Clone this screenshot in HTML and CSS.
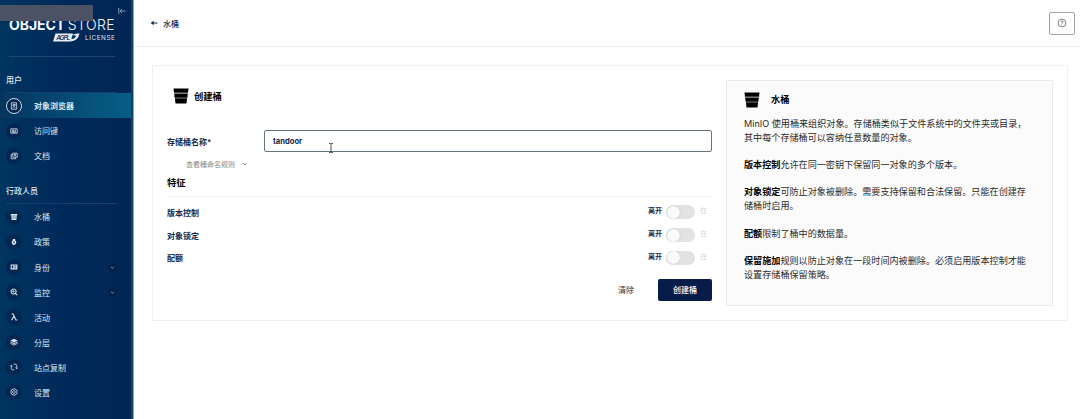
FILE: index.html
```html
<!DOCTYPE html>
<html lang="zh-CN">
<head>
  <meta charset="UTF-8">
  <meta name="viewport" content="width=device-width, initial-scale=1.0">
  <title>创建桶</title>
  <link rel="stylesheet" href="styles.css">
</head>
<body>
<div class="app">
  <nav class="sidebar">
    <div class="redact"></div>
    <svg class="collapse" viewBox="0 0 8 8"><path d="M.8 1v6M7.500 4H2M4 2L2 4l2 2"/></svg>
    <div class="logo">
      <div class="logo-name"><b>OBJECT</b><span>STORE</span></div>
      <div class="logo-license">
        <svg class="agpl" viewBox="0 0 27 9"><path class="plate" d="M2.500.5H20L17.500 8.500H0z"/><path class="swoosh" d="M17.500 8.500Q25 8 26.500.5Q21 0 19.500 2.500Q23 1.500 23 3.500Q21 6.500 18 6z"/><text x="3.200" y="6.800" textLength="14">AGPL</text></svg>
        <span>LICENSE</span>
      </div>
    </div>

    <div class="group">用户</div>
    <ul class="menu">
      <li class="item active"><i><svg viewBox="0 0 10 10"><path d="M1.700 1h6.600v8H1.700zM3.800 3h2.400v1.800H3.800zM3.500 7.200l1.500-1.700 2 1.700M6.800 3v1"/></svg></i><span>对象浏览器</span></li>
      <li class="item"><i><svg viewBox="0 0 10 10"><path d="M1 2.300h8v5.400H1zM2.800 4h1.700v1.500H2.800zM5.500 4h2M5.500 5.500h2M3 6.700h4"/></svg></i><span>访问键</span></li>
      <li class="item"><i><svg viewBox="0 0 10 10"><path d="M3.500 1.500H9v5H3.500zM3.500 3h-2v5.500H7v-2M5 3h2.500M5 4.500h2.500"/></svg></i><span>文档</span></li>
    </ul>

    <div class="group">行政人员</div>
    <ul class="menu">
      <li class="item"><i><svg viewBox="0 0 10 10"><path class="fill" d="M.8 1.200h8.400l-.3 2.300H1.100zM1.300 4h7.400l-.3 2H1.600zM1.700 6.500h6.600L8 8.800H2z"/></svg></i><span>水桶</span></li>
      <li class="item"><i><svg viewBox="0 0 10 10"><path class="fill" fill-rule="evenodd" d="M3.500 3V1.200h3V3Q7.900 3.500 7.900 5.500T5 9Q2.100 8 2.100 5.500T3.500 3zM4.400 4v3h1.200V4z"/></svg></i><span>政策</span></li>
      <li class="item"><i><svg viewBox="0 0 10 10"><path class="fill" fill-rule="evenodd" d="M.8 2h8.400v6H.8zM5.200 3.200v1h2.600v-1zM5.200 5.500v1h2.600v-1zM2.200 3.200v3.500h1.800V3.200z"/></svg></i><span>身份</span><svg class="chev" viewBox="0 0 8 8"><path d="M2.500 3.300L4 4.700l1.500-1.400"/></svg></li>
      <li class="item"><i><svg viewBox="0 0 10 10"><path class="bold" d="M4.500 1.200a3.200 3.200 0 1 0 .01 0M6.700 6.700L9 9M3 4.500l1-1 .7 1.500 1-.8"/></svg></i><span>监控</span><svg class="chev" viewBox="0 0 8 8"><path d="M2.500 3.300L4 4.700l1.500-1.400"/></svg></li>
      <li class="item"><i><svg viewBox="0 0 10 10"><path class="bold" d="M2 1.300h2L7.400 8.700H9M4.900 4L2 8.900"/></svg></i><span>活动</span></li>
      <li class="item"><i><svg viewBox="0 0 10 10"><path class="fill" d="M5 .8L9.500 3.200 5 5.500.5 3.200zM.5 4.200L5 6.500l4.500-2.300v1.200L5 7.700.5 5.400zM.5 6.300L5 8.500l4.500-2.200v.8L5 9.400.5 7.100z"/></svg></i><span>分层</span></li>
      <li class="item"><i><svg viewBox="0 0 10 10"><path d="M4.500 1.500H6.500Q8.400 1.500 8.400 3.500V7M6.800 5.600L8.400 7.200 9.800 5.600M5.500 8.500H3.500Q1.600 8.500 1.600 6.500V3M.2 4.400L1.600 2.800 3.200 4.400"/></svg></i><span>站点复制</span></li>
      <li class="item"><i><svg viewBox="0 0 10 10"><path d="M5 .9l2.900 1.200L9.100 5 7.900 7.900 5 9.100 2.100 7.900.9 5l1.200-2.900zM5 3.300a1.700 1.700 0 1 0 .01 0"/></svg></i><span>设置</span></li>
    </ul>
  </nav>

  <main class="main">
    <header class="topbar">
      <a class="back"><svg viewBox="0 0 8 8"><path d="M7.500 4H2"/><path class="head" d="M3.700 1.800v4.400L.6 4z"/></svg>水桶</a>
      <button class="help-btn"><svg viewBox="0 0 10 10"><circle cx="5" cy="5" r="3.900"/><path d="M3.900 4Q4 2.900 5.200 3T6.200 4.200L4.900 5.400v.5M4.800 6.500v.8"/></svg></button>
    </header>

    <div class="card">
      <form class="form">
        <h1 class="title"><svg class="bucket" viewBox="0 0 16 16"><path d="M.5.600h15l-.5 4.200H1zM1.200 5.400h13.600l-.4 4.300H1.600zM1.900 10.300h12.200l-.6 5.100H2.500z"/></svg>创建桶</h1>
        <div class="field">
          <label>存储桶名称*</label>
          <div class="input">tandoor<svg class="cursor" viewBox="0 0 6 10"><path d="M1 .5h1.500L3 1l.5-.5H5M3 1v8M1 9.500h1.500L3 9l.5.5H5"/></svg></div>
        </div>
        <div class="rules">查看桶命名规则<svg viewBox="0 0 8 8"><path d="M2.200 3.200L4 4.800l1.800-1.600"/></svg></div>
        <h2 class="subtitle">特征</h2>
        <div class="row"><label>版本控制</label><span class="off">离开</span><span class="switch"></span><span class="on">在</span></div>
        <div class="row"><label>对象锁定</label><span class="off">离开</span><span class="switch"></span><span class="on">在</span></div>
        <div class="row"><label>配额</label><span class="off">离开</span><span class="switch"></span><span class="on">在</span></div>
        <div class="actions">
          <button type="button" class="clear">清除</button>
          <button type="button" class="create">创建桶</button>
        </div>
      </form>

      <aside class="help">
        <h3 class="help-title"><svg class="bucket" viewBox="0 0 16 16"><path d="M.5.600h15l-.5 4.200H1zM1.200 5.400h13.600l-.4 4.300H1.600zM1.900 10.300h12.200l-.6 5.100H2.500z"/></svg>水桶</h3>
        <p>MinIO 使用桶来组织对象。存储桶类似于文件系统中的文件夹或目录，<br>其中每个存储桶可以容纳任意数量的对象。</p>
        <p><b>版本控制</b>允许在同一密钥下保留同一对象的多个版本。</p>
        <p><b>对象锁定</b>可防止对象被删除。需要支持保留和合法保留。只能在创建存<br>储桶时启用。</p>
        <p><b>配额</b>限制了桶中的数据量。</p>
        <p><b>保留施加</b>规则以防止对象在一段时间内被删除。必须启用版本控制才能<br>设置存储桶保留策略。</p>
      </aside>
    </div>
  </main>
</div>
</body>
</html>
```
FILE: styles.css
```css
* {
  box-sizing: border-box;
}
body {
  margin: 0;
  background: #fff;
  color: #12284c;
  font-family: Inter, "Noto Sans CJK SC", sans-serif;
  font-size: 8px;
  overflow: hidden;
}
svg {
  display: block;
  fill: none;
  stroke: currentColor;
}
button {
  font-family: inherit;
  font-size: 8px;
  padding: 0;
}
.app {
  display: flex;
  height: 419px;
}

/* Sidebar */
.sidebar {
  position: relative;
  width: 134px;
  flex: none;
  padding-right: 3px;
  color: #dbe6f1;
  background: linear-gradient(to right, transparent 131px, #0d426b 131px, #0d426b 133px, #7eabc2 133px), linear-gradient(to right, #003560 0, #002a5a 60px, #022654 131px);
}
.redact {
  position: absolute;
  top: 5px;
  left: 0;
  width: 93px;
  height: 16px;
  background: #4b5264;
  z-index: 2;
}
.collapse {
  position: absolute;
  top: 7px;
  left: 118px;
  width: 8px;
  height: 8px;
  color: #8ba4c0;
  stroke-width: .9;
}
.logo {
  height: 57px;
  margin: 0 16px 0 9px;
  padding-top: 17px;
  border-bottom: 1px solid #1b4771;
}
.logo-name {
  display: flex;
  justify-content: space-between;
  font-size: 14px;
  line-height: 16px;
  color: #f3f7fb;
}
.logo-name b {
  font-weight: 700;
  letter-spacing: -.05px;
}
.logo-name span {
  font-weight: 300;
  letter-spacing: .4px;
}
.logo-license {
  display: flex;
  justify-content: flex-end;
  align-items: center;
  gap: 5px;
  height: 9px;
  font-size: 6.4px;
  letter-spacing: .55px;
}
.logo-license span {
  margin-right: -.5px;
}
.agpl {
  width: 27px;
  height: 9px;
  stroke: none;
}
.plate,
.swoosh {
  fill: #e8eff6;
}
.agpl text {
  fill: #163a66;
  font-size: 6.5px;
  font-style: italic;
  font-weight: 600;
  letter-spacing: 0;
}
.group {
  height: 36px;
  margin: 0 14px 0 6px;
  padding-top: 16px;
  line-height: 14px;
  border-bottom: 1px solid #173f6c;
  font-weight: 500;
}
.menu {
  list-style: none;
  margin: 0;
  padding: 0;
}
.item {
  display: flex;
  align-items: center;
  height: 25.1px;
  padding: 0 14px 0 6px;
}
.item i {
  display: flex;
  align-items: center;
  justify-content: center;
  width: 16px;
  height: 16px;
  margin-right: 12px;
  border-radius: 50%;
  background: #022852;
}
.item i svg {
  width: 8px;
  height: 8px;
}
.item .fill {
  fill: currentColor;
  stroke: none;
}
.item .bold {
  stroke-width: 1.3;
}
.item.active {
  background: linear-gradient(to right, #04355f, #075e87);
  font-weight: 700;
}
.item.active i {
  border: 1px solid #c9d9e6;
}
.chev {
  width: 9px;
  height: 9px;
  margin-left: auto;
  border-radius: 50%;
  background: #02204a;
  color: #8298b4;
  stroke-width: .8;
}

/* Content */
.main {
  flex: 1;
}
.topbar {
  display: flex;
  align-items: center;
  justify-content: space-between;
  height: 47px;
  padding: 0 5px 0 16px;
  border-bottom: 1px solid #eee;
}
.back {
  display: flex;
  align-items: center;
  gap: 5px;
  font-weight: 500;
  color: #0c2b4d;
}
.back svg {
  width: 8px;
  height: 8px;
}
.back .head {
  fill: currentColor;
  stroke: none;
}
.help-btn {
  display: flex;
  align-items: center;
  justify-content: center;
  width: 26px;
  height: 23px;
  background: #fff;
  border: 1px solid #a5a5a5;
  border-radius: 2px;
  color: #5e5e5e;
}
.help-btn svg {
  width: 10px;
  height: 10px;
  stroke-width: .8;
}
.card {
  display: flex;
  gap: 14px;
  width: 916px;
  height: 256px;
  margin: 18px 0 0 18px;
  padding: 14px;
  border: 1px solid #f0f0f0;
}
.form {
  width: 545px;
}
.bucket {
  width: 16px;
  height: 16px;
  color: #000;
  fill: #000;
  stroke: none;
}
.title {
  display: flex;
  align-items: center;
  gap: 5px;
  height: 32px;
  margin: 0;
  padding-left: 6px;
  font-size: 9.3px;
  font-weight: 600;
  color: #000;
}
.field {
  display: flex;
  align-items: center;
  height: 22px;
  margin-top: 18px;
}
.field label {
  width: 97px;
  font-weight: 600;
}
.input {
  position: relative;
  flex: 1;
  height: 22px;
  padding-left: 8px;
  line-height: 22px;
  border: 1px solid #66747c;
  border-radius: 2px;
  font-size: 7.6px;
  font-weight: 700;
}
.cursor {
  position: absolute;
  top: 12px;
  left: 63px;
  width: 6px;
  height: 10px;
  color: #222;
  stroke-width: .8;
}
.rules {
  display: flex;
  align-items: center;
  gap: 6px;
  height: 23px;
  padding-left: 19px;
  font-size: 7px;
  color: #858585;
}
.rules svg {
  width: 8px;
  height: 8px;
}
.subtitle {
  height: 22px;
  margin: 0 0 4px;
  line-height: 16px;
  border-bottom: 1px solid #efefef;
  font-size: 9.3px;
  font-weight: 600;
  color: #000;
}
.row {
  display: flex;
  align-items: center;
  height: 22.8px;
  padding-right: 5px;
}
.row label {
  flex: 1;
  font-weight: 600;
}
.off,
.on {
  font-size: 7px;
  line-height: 14px;
  padding-bottom: 2px;
}
.off {
  font-weight: 600;
}
.on {
  color: #d5d5d5;
}
.switch {
  width: 29px;
  height: 14px;
  margin: 0 5px 0 4px;
  border-radius: 7px;
  background: #e2e2e2;
}
.switch::before {
  content: "";
  display: block;
  width: 13px;
  height: 13px;
  margin: .5px;
  border-radius: 50%;
  background: #fafafa;
  box-shadow: 0 0 1px #aaa;
}
.actions {
  display: flex;
  justify-content: flex-end;
  gap: 24px;
  margin-top: 9.5px;
}
.clear {
  border: 0;
  background: none;
  color: #333;
}
.create {
  width: 54px;
  height: 22px;
  border: 0;
  border-radius: 2px;
  background: #081c4a;
  color: #fff;
  font-weight: 500;
}

/* Help panel */
.help {
  width: 327px;
  height: 226px;
  padding: 10px 0 0 17px;
  background: #fbfbfb;
  border: 1px solid #eaeaea;
  font-size: 9.1px;
  line-height: 13.7px;
  color: #2b2b2b;
}
.help-title {
  display: flex;
  align-items: center;
  gap: 11px;
  height: 18px;
  margin: 0 0 8px;
  font-size: 9.3px;
  font-weight: 600;
  color: #000;
}
.help p {
  margin: 0 0 13.7px;
  white-space: nowrap;
}
.help b {
  color: #000;
  font-weight: 600;
}
```
